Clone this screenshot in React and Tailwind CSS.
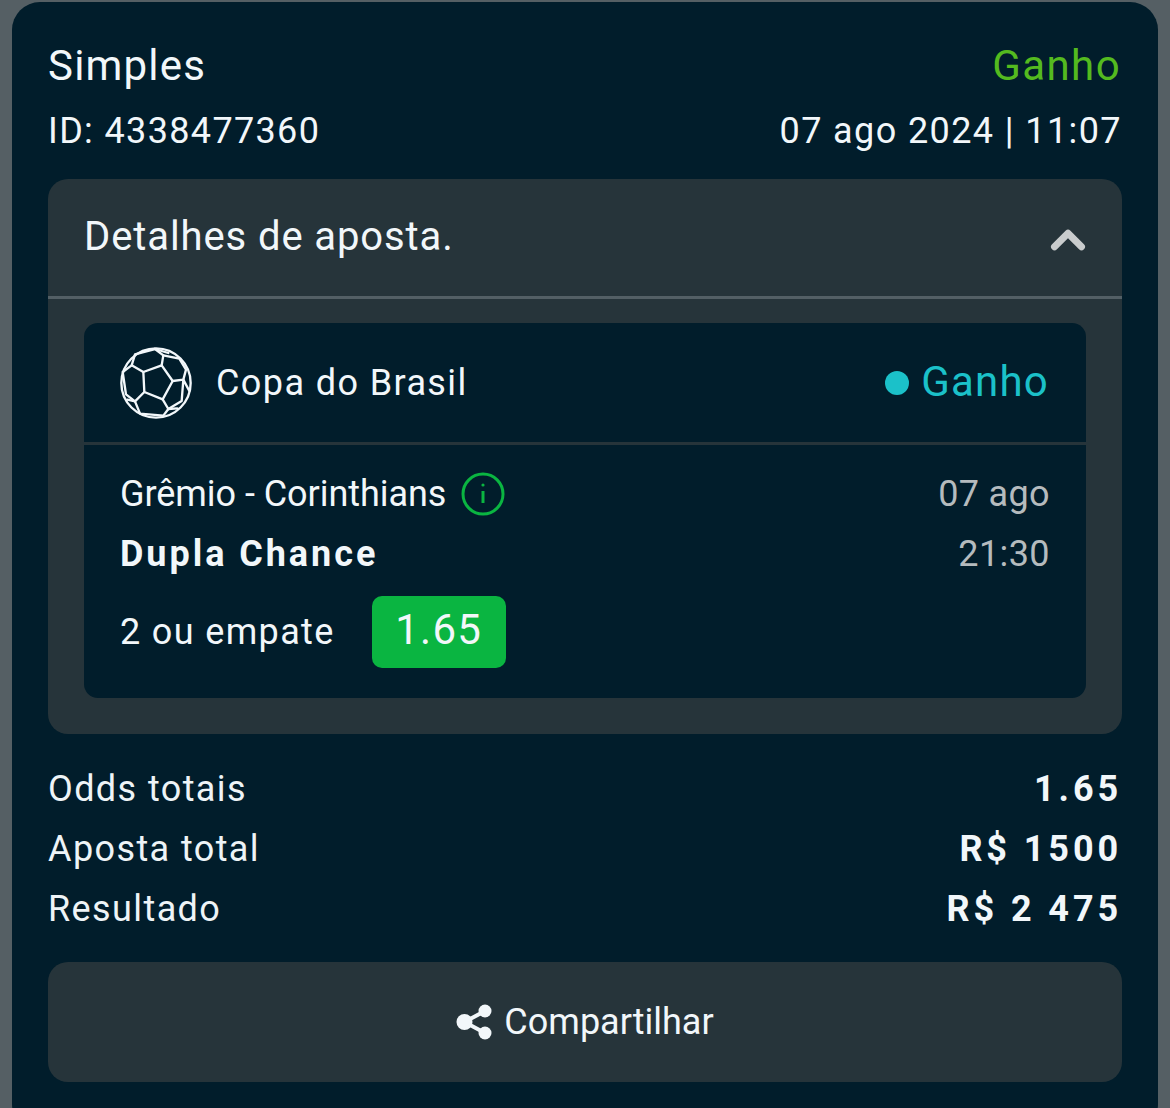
import React from "react";
import { ChevronUp } from "lucide-react";

function SoccerBall() {
  return (
    <svg viewBox="57 47 222 222" className="w-[74px] h-[74px] shrink-0" fill="none" stroke="#f2f7fa" strokeWidth="7" strokeLinejoin="round" strokeLinecap="round">
      <circle cx="168" cy="158" r="104" />
      <path d="M130 125 L185 105 L218 152 L188 207 L133 185 Z" />
      <path d="M130 125 L95 105 L105 72 L165 56 L190 75 L185 105" />
      <path d="M190 75 L238 85 L258 118 L250 148 L218 152" />
      <path d="M250 148 L268 182 M250 148 L245 212 L205 236 L188 207" />
      <path d="M133 185 L105 213 L120 250 L190 256 L205 236" />
      <path d="M105 213 L78 192 L68 125 L95 105" />
      <path d="M105 213 L82 208 M205 236 L232 234 M165 56 L205 68" />
    </svg>
  );
}

function ShareIcon() {
  return (
    <svg viewBox="0 0 36 36" className="w-9 h-9 shrink-0" fill="#f2f7fa">
      <circle cx="8.5" cy="18" r="8" />
      <circle cx="29" cy="7" r="6.5" />
      <circle cx="29" cy="29" r="6.5" />
      <path d="M8.5 18 L29 7 M8.5 18 L29 29" stroke="#f2f7fa" strokeWidth="4" />
    </svg>
  );
}

function InfoIcon() {
  return (
    <svg viewBox="0 0 44 44" className="w-11 h-11 shrink-0" fill="none" stroke="#0ab541" strokeWidth="3">
      <circle cx="22" cy="22" r="20" />
      <path d="M22 19 V31" strokeWidth="3" />
      <circle cx="22" cy="13" r="1.6" fill="#0ab541" stroke="none" />
    </svg>
  );
}

function TotalRow({ label, value }) {
  return (
    <div className="flex justify-between items-center h-[60px]">
      <span className="text-[36px] tracking-[1.4px] text-[#eef4f7]">{label}</span>
      <span className="text-[36px] font-bold tracking-[3.9px] text-[#f2f7fa]">{value}</span>
    </div>
  );
}

export default function App() {
  return (
    <div className="h-[1108px] overflow-hidden bg-[#555f64] pt-[2px] px-3 font-['Roboto',sans-serif]">
      <div className="bg-[#011d2b] rounded-[28px] px-9 pt-[33px] h-[1130px] text-[#f2f7fa]">
        <div className="flex justify-between items-center h-[60px]">
          <span className="text-[42px] tracking-[1.2px]">Simples</span>
          <span className="text-[42px] tracking-[1.4px] text-[#54ba1f] mr-px">Ganho</span>
        </div>
        <div className="flex justify-between items-center h-[71px]">
          <span className="text-[36px] tracking-[1.35px]">ID: 4338477360</span>
          <span className="text-[36px] tracking-[1.4px]">07 ago 2024 | 11:07</span>
        </div>

        {/* bet details */}
        <div className="bg-[#26343a] rounded-[20px] mt-[13px] pb-9">
          <div className="flex justify-between items-center h-[120px] pl-9 pr-[27px] border-b-[3px] border-[#535f65]">
            <span className="text-[40px] tracking-[0.9px] mb-[2px]">Detalhes de aposta.</span>
            <ChevronUp className="w-[54px] h-[54px] text-[#c9cccd] mt-[5px]" strokeWidth={3.1} />
          </div>
          <div className="bg-[#011d2b] rounded-[14px] mx-9 mt-[24px] h-[375px]">
            <div className="flex items-center justify-between h-[122px] pl-[35px] pr-[37px] border-b-[3px] border-[#26343a]">
              <div className="flex items-center gap-[23px]">
                <SoccerBall />
                <span className="text-[36px] tracking-[1.4px]">Copa do Brasil</span>
              </div>
              <div className="flex items-center gap-3">
                <span className="w-6 h-6 rounded-full bg-[#1bc1c9]" />
                <span className="text-[42px] tracking-[1.2px] text-[#1bc1c9] mb-[3px]">Ganho</span>
              </div>
            </div>
            <div className="pl-9 pr-9 pt-[19px]">
              <div className="flex justify-between items-center h-[60px]">
                <div className="flex items-center gap-[15px]">
                  <span className="text-[36px] tracking-[-0.05px]">Grêmio - Corinthians</span>
                  <InfoIcon />
                </div>
                <span className="text-[36px] tracking-[0.35px] text-[#b5bbbe]">07 ago</span>
              </div>
              <div className="flex justify-between items-center h-[60px]">
                <span className="text-[36px] font-bold tracking-[2.95px]">Dupla Chance</span>
                <span className="text-[36px] tracking-[0.4px] text-[#b5bbbe]">21:30</span>
              </div>
              <div className="flex items-center gap-[37px] mt-[12px]">
                <span className="text-[36px] tracking-[1.35px]">2 ou empate</span>
                <span className="bg-[#0ab541] rounded-[10px] w-[134px] h-[72px] pb-[6px] flex items-center justify-center text-[42px] tracking-[1.2px]">1.65</span>
              </div>
            </div>
          </div>
        </div>

        <div className="mt-[25px]">
          <TotalRow label="Odds totais" value="1.65" />
          <TotalRow label="Aposta total" value="R$ 1500" />
          <TotalRow label="Resultado" value="R$ 2 475" />
        </div>

        <div className="mt-[23px] bg-[#26343a] rounded-[20px] h-[120px] flex items-center justify-center gap-[12px]">
          <ShareIcon />
          <span className="text-[36px]">Compartilhar</span>
        </div>
      </div>
    </div>
  );
}
